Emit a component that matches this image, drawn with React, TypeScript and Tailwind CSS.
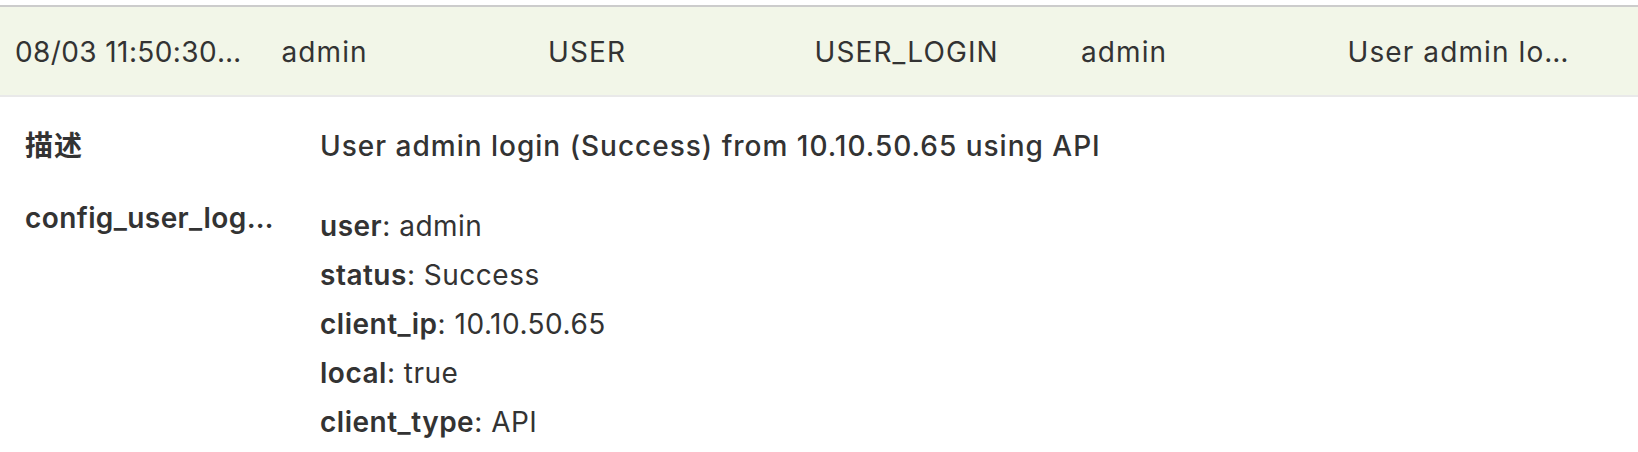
import React from 'react';

const rowCells = [
  '08/03 11:50:30 AM',
  'admin',
  'USER',
  'USER_LOGIN',
  'admin',
  'User admin login (Success) from 10.10.50.65 using API',
];

const props = [
  { key: 'user', value: 'admin' },
  { key: 'status', value: 'Success' },
  { key: 'client_ip', value: '10.10.50.65' },
  { key: 'local', value: 'true' },
  { key: 'client_type', value: 'API' },
];

const App = () => {
  return (
    <div
      className="w-[1638px] h-[452px] overflow-hidden bg-white pt-[5px] text-[#333333]"
      style={{ fontFamily: 'Inter, "Noto Sans CJK SC", sans-serif' }}
    >
      {/* Selected row */}
      <div className="flex h-[92px] items-center border-t-2 border-b-2 border-t-[#cccccc] border-b-[#e9e9e9] bg-[#f2f6e8] pt-[2px]">
        {rowCells.map((cell, i) => (
          <div key={i} className="w-[266.5px] shrink-0 pl-[15px] pr-[21px]">
            <div
              className={
                i === 0
                  ? 'truncate text-[28px] leading-[34px] tracking-[0.4px]'
                  : 'truncate text-[28px] leading-[34px] tracking-[1.1px]'
              }
            >
              {cell}
            </div>
          </div>
        ))}
      </div>

      {/* Expanded detail */}
      <div className="grid grid-cols-[295px_1fr] pl-[25px] pt-[25px] text-[28px] leading-[49px]">
        <div className="font-semibold tracking-[1px]">描述</div>
        <div className="font-medium tracking-[1px]">User admin login (Success) from 10.10.50.65 using API</div>

        <div className="mt-[26px] w-[250px] truncate font-semibold leading-[42px] tracking-[0.4px]">config_user_login_event</div>
        <div className="mt-[31px] tracking-[0.5px]">
          {props.map((p) => (
            <div key={p.key}>
              <span className="font-semibold">{p.key}</span>: {p.value}
            </div>
          ))}
        </div>
      </div>
    </div>
  );
};

export default App;
